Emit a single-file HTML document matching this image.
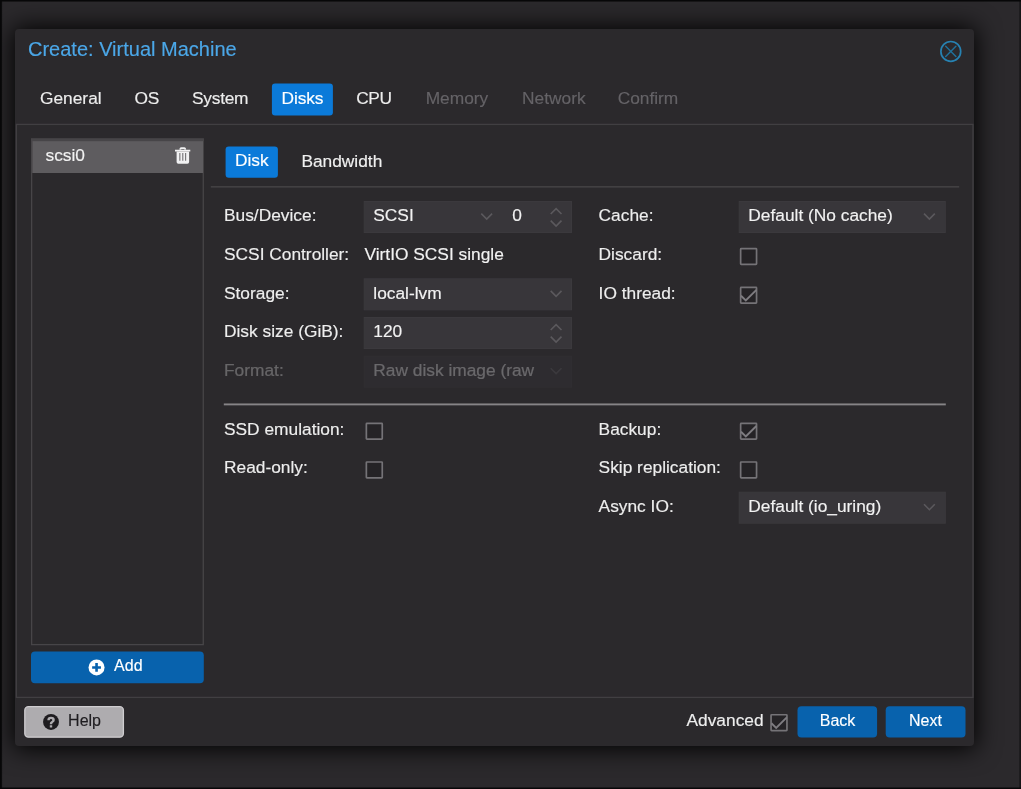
<!DOCTYPE html>
<html lang="en">
<head>
<meta charset="utf-8">
<title>Create: Virtual Machine</title>
<style>
html,body{margin:0;padding:0;}
body{width:1021px;height:789px;overflow:hidden;background:#2b292c;position:relative;
  font-family:"Liberation Sans",Arial,Helvetica,sans-serif;font-size:17.33px;color:#efefef;-webkit-text-stroke:0.15px;}
*{box-sizing:border-box;}
#root{position:absolute;left:0;top:0;width:1021px;height:789px;will-change:transform;}
#frame{position:absolute;left:0;top:0;width:1021px;height:789px;pointer-events:none;z-index:50;
  background:
   linear-gradient(to right,#070708 0,#070708 1.3px,rgba(7,7,8,0) 2.6px) left top/3px 100% no-repeat,
   linear-gradient(to bottom,#070708 0,#070708 0.9px,rgba(7,7,8,0) 2.2px) left top/100% 3px no-repeat,
   linear-gradient(to top,#070708 0,#070708 0.9px,rgba(7,7,8,0) 2.1px) left bottom/100% 3px no-repeat,
   linear-gradient(to left,rgba(7,7,8,.55) 0,rgba(7,7,8,.55) 1.2px,rgba(7,7,8,0) 2.2px) right top/3px 100% no-repeat;}
#win{position:absolute;left:15px;top:29px;width:959px;height:717px;background:#2b292c;border-radius:4px;
  box-shadow:0 0.5px 25px 2px rgba(0,0,0,.98);}
#title{position:absolute;left:28px;top:37.2px;font-size:20px;line-height:24px;color:#4ba7e8;white-space:nowrap;}
.t{position:absolute;white-space:nowrap;line-height:20px;height:20px;}
.tab{position:absolute;top:83.5px;height:32px;line-height:29px;padding:0 9.33px;white-space:nowrap;color:#ededed;}
.tab.on{color:#fff;}
.tab.dis{color:#656367;}
.btn{position:absolute;color:#fff;text-align:center;white-space:nowrap;font-size:16px;}
.lbl{position:absolute;white-space:nowrap;line-height:20px;color:#eeeeee;}
.val{position:absolute;white-space:nowrap;line-height:20px;color:#f2f2f2;}
.dim{opacity:.3;}
svg.layer{position:absolute;left:0;top:0;overflow:visible;}
</style>
</head>
<body>
<div id="root">
<div id="win"></div>
<svg class="layer" width="1021" height="789" viewBox="0 0 1021 789">
<rect x="16.4" y="124.4" width="956.6" height="573" fill="none" stroke="#413f42" stroke-width="1.3"/>
<rect x="31.65" y="139.0" width="171.6" height="505.6" fill="none" stroke="#474548" stroke-width="1.3"/>
<rect x="31.00" y="138.55" width="172.90" height="2.70" fill="#474548"/>
<rect x="32.3" y="141.1" width="170.7" height="31.9" fill="#5e5c5f"/>
<rect x="271.9" y="83.5" width="61" height="31.9" rx="3.2" fill="#0b7ad9"/>
<rect x="225.6" y="146.4" width="52.3" height="31.4" rx="3.2" fill="#0b7ad9"/>
<rect x="31" y="651.6" width="172.8" height="31.6" rx="4" fill="#0862ad"/>
<rect x="797.5" y="706.2" width="79.6" height="31.4" rx="4" fill="#0862ad"/>
<rect x="885.7" y="706.2" width="79.8" height="31.4" rx="4" fill="#0862ad"/>
<rect x="24.8" y="706.7" width="98.6" height="30.5" rx="3.6" fill="#aeacaf" stroke="#cfcdd0" stroke-width="1.3"/>
<rect x="210.80" y="186.17" width="748.40" height="1.35" fill="#474548"/>
<rect x="223.80" y="403.45" width="722.00" height="1.90" fill="#868487"/>
<rect x="364.20" y="201.50" width="207.30" height="31" fill="#38363a" stroke="#3b393d" stroke-width="1"/>
<rect x="364.20" y="278.83" width="207.30" height="31" fill="#38363a" stroke="#3b393d" stroke-width="1"/>
<rect x="364.20" y="317.50" width="207.30" height="31" fill="#38363a" stroke="#3b393d" stroke-width="1"/>
<rect x="364.20" y="356.17" width="207.30" height="31" fill="#38363a" stroke="#3b393d" stroke-width="1" opacity="0.3"/>
<rect x="739.20" y="201.50" width="206.10" height="31" fill="#38363a" stroke="#3b393d" stroke-width="1"/>
<rect x="739.20" y="492.20" width="206.10" height="31" fill="#38363a" stroke="#3b393d" stroke-width="1"/>
</svg>
<div id="title">Create: Virtual Machine</div>
<div class="tab" style="left:30.67px">General</div>
<div class="tab" style="left:125.07px">OS</div>
<div class="tab" style="left:182.7px;letter-spacing:-0.25px">System</div>
<div class="tab on" style="left:271.9px;width:61px;padding:0;text-align:center;letter-spacing:-0.15px">Disks</div>
<div class="tab" style="left:346.9px;letter-spacing:-0.4px">CPU</div>
<div class="tab dis" style="left:416.3px">Memory</div>
<div class="tab dis" style="left:512.7px">Network</div>
<div class="tab dis" style="left:608.3px">Confirm</div>
<div class="tab on" style="left:225.6px;top:146.4px;height:31.6px;width:52.3px;padding:0;text-align:center;line-height:29.2px">Disk</div>
<div class="t" style="left:301.40px;top:151px;color:#f0f0f0">Bandwidth</div>
<div class="t" style="left:45.50px;top:145px;color:#f2f2f2">scsi0</div>
<div class="t" style="left:114.10px;top:656px;color:#fff;font-size:16px">Add</div>
<div class="t" style="left:68.10px;top:711px;color:#1f1d20;font-size:16px">Help</div>
<div class="btn" style="left:797.5px;top:706.2px;width:80px;height:31.7px;line-height:29.8px">Back</div>
<div class="btn" style="left:885.5px;top:706.2px;width:80px;height:31.7px;line-height:29.8px">Next</div>
<div class="lbl" style="left:686.5px;top:710px">Advanced</div>
<div class="lbl" style="left:224.00px;top:205px">Bus/Device:</div>
<div class="val" style="left:373.30px;top:205px">SCSI</div>
<div class="val" style="left:512.20px;top:205px">0</div>
<div class="lbl" style="left:224.00px;top:244px">SCSI Controller:</div>
<div class="val" style="left:364.50px;top:244px">VirtIO SCSI single</div>
<div class="lbl" style="left:224.00px;top:283px">Storage:</div>
<div class="val" style="left:373.30px;top:283px">local-lvm</div>
<div class="lbl" style="left:224.00px;top:321px">Disk size (GiB):</div>
<div class="val" style="left:373.30px;top:321px">120</div>
<div class="lbl dim" style="left:224.00px;top:360px">Format:</div>
<div class="val dim" style="left:373.30px;top:360px">Raw disk image (raw</div>
<div class="lbl" style="left:598.60px;top:205px">Cache:</div>
<div class="val" style="left:748.30px;top:205px">Default (No cache)</div>
<div class="lbl" style="left:598.60px;top:244px">Discard:</div>
<div class="lbl" style="left:598.60px;top:283px">IO thread:</div>
<div class="lbl" style="left:224.00px;top:419px">SSD emulation:</div>
<div class="lbl" style="left:224.00px;top:457px">Read-only:</div>
<div class="lbl" style="left:598.60px;top:419px">Backup:</div>
<div class="lbl" style="left:598.60px;top:457px">Skip replication:</div>
<div class="lbl" style="left:598.60px;top:496px">Async IO:</div>
<div class="val" style="left:748.30px;top:496px">Default (io_uring)</div>
<svg class="layer" width="1021" height="789" viewBox="0 0 1021 789">
<g transform="translate(938.8 39.4)"><circle cx="12" cy="12" r="9.9" fill="none" stroke="#2782b2" stroke-width="1.7"/><path d="M6.9 6.9 L17.1 17.1 M17.1 6.9 L6.9 17.1" stroke="#20719b" stroke-width="1.4" fill="none" stroke-linecap="round"/></g>
<g transform="translate(175 147)" fill="#f1f1f2" fill-rule="evenodd"><path d="M0 2.8 h15.3 v1.75 h-15.3 z M4.1 2.9 L4.8 1.1 Q5.2 0.15 6.3 0.15 h2.9 Q10.3 0.15 10.7 1.1 L11.4 2.9 z M6.0 2.9 L6.3 2.0 h2.9 L9.5 2.9 z"/><path d="M1.6 4.4 h12.5 v10.7 q0 1.7 -1.7 1.7 h-9.1 q-1.7 0 -1.7 -1.7 z M4.4 6.1 v7.6 h0.95 v-7.6 z M7.35 6.1 v7.6 h0.95 v-7.6 z M10.2 6.1 v7.6 h0.95 v-7.6 z"/></g>
<g transform="translate(88.55 659.45)"><circle cx="8" cy="8" r="8" fill="#fff"/><path d="M6.7 3.6 h2.6 v3.1 h3.1 v2.6 h-3.1 v3.1 h-2.6 v-3.1 h-3.1 v-2.6 h3.1 z" fill="#0862ad"/></g>
<g transform="translate(43.0 713.95)"><circle cx="8" cy="8" r="7.95" fill="#1e1c1f"/><path d="M4.3 6.3 Q4.3 2.9 8 2.9 Q11.8 2.9 11.8 6.0 Q11.8 7.7 10.2 8.6 Q9.2 9.2 9.2 10.0 V10.4 H6.8 V9.7 Q6.8 8.1 8.3 7.2 Q9.3 6.7 9.3 6.0 Q9.3 5.0 8 5.0 Q6.8 5.0 6.7 6.3 Z M6.8 11.2 H9.2 V13.5 H6.8 Z" fill="#aeacaf"/></g>
<path transform="translate(480.80 213.00)" d="M0.5 0.6 L5.9 6.0 L11.3 0.6" fill="none" stroke="#5b595d" stroke-width="1.6"/>
<path transform="translate(550.20 207.90)" d="M0.5 6.1 L5.9 0.7 L11.3 6.1 M0.5 12.7 L5.9 18.1 L11.3 12.7" fill="none" stroke="#5b595d" stroke-width="1.6"/>
<path transform="translate(550.20 290.33)" d="M0.5 0.6 L5.9 6.0 L11.3 0.6" fill="none" stroke="#5b595d" stroke-width="1.6"/>
<path transform="translate(550.20 323.90)" d="M0.5 6.1 L5.9 0.7 L11.3 6.1 M0.5 12.7 L5.9 18.1 L11.3 12.7" fill="none" stroke="#5b595d" stroke-width="1.6"/>
<path transform="translate(550.20 367.67)" d="M0.5 0.6 L5.9 6.0 L11.3 0.6" fill="none" stroke="#5b595d" stroke-width="1.6" opacity="0.3"/>
<path transform="translate(923.50 213.00)" d="M0.5 0.6 L5.9 6.0 L11.3 0.6" fill="none" stroke="#5b595d" stroke-width="1.6"/>
<g transform="translate(739.80 247.77)"><rect x="0.85" y="0.85" width="15.9" height="15.8" rx="0.6" fill="#252326" stroke="#757377" stroke-width="1.7"/></g>
<g transform="translate(739.80 286.43)"><rect x="0.85" y="0.85" width="15.9" height="15.8" rx="0.6" fill="#252326" stroke="#757377" stroke-width="1.7"/><path d="M1.2 9.3 L6.0 14.0 L16.6 3.5" fill="none" stroke="#7e7c80" stroke-width="1.9"/></g>
<g transform="translate(365.50 422.50)"><rect x="0.85" y="0.85" width="15.9" height="15.8" rx="0.6" fill="#252326" stroke="#757377" stroke-width="1.7"/></g>
<g transform="translate(365.50 461.15)"><rect x="0.85" y="0.85" width="15.9" height="15.8" rx="0.6" fill="#252326" stroke="#757377" stroke-width="1.7"/></g>
<g transform="translate(739.80 422.50)"><rect x="0.85" y="0.85" width="15.9" height="15.8" rx="0.6" fill="#252326" stroke="#757377" stroke-width="1.7"/><path d="M1.2 9.3 L6.0 14.0 L16.6 3.5" fill="none" stroke="#7e7c80" stroke-width="1.9"/></g>
<g transform="translate(739.80 461.15)"><rect x="0.85" y="0.85" width="15.9" height="15.8" rx="0.6" fill="#252326" stroke="#757377" stroke-width="1.7"/></g>
<path transform="translate(923.50 503.70)" d="M0.5 0.6 L5.9 6.0 L11.3 0.6" fill="none" stroke="#5b595d" stroke-width="1.6"/>
<g transform="translate(770.20 713.90)"><rect x="0.85" y="0.85" width="15.9" height="15.8" rx="0.6" fill="#252326" stroke="#757377" stroke-width="1.7"/><path d="M1.2 9.3 L6.0 14.0 L16.6 3.5" fill="none" stroke="#7e7c80" stroke-width="1.9"/></g>
</svg>
</div>
<div id="frame"></div>
</body>
</html>
